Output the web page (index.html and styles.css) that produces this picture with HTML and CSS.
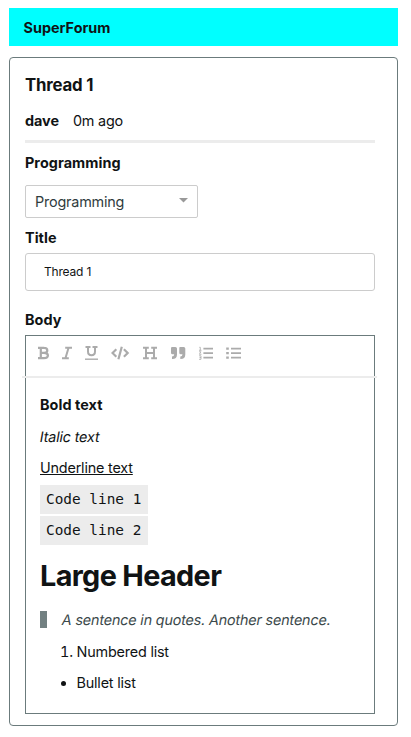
FILE: index.html
```html
<!DOCTYPE html>
<html lang="en">
<head>
<meta charset="utf-8">
<title>SuperForum</title>
<link rel="stylesheet" href="styles.css">
</head>
<body>
<header class="topbar">SuperForum</header>
<main class="thread">
  <h1 class="thread-title">Thread 1</h1>
  <div class="meta"><strong>dave</strong><span>0m ago</span></div>
  <div class="label category">Programming</div>
  <div class="select"><span>Programming</span><svg width="9" height="5" viewBox="0 0 9 5"><path d="M0 0h9L4.5 4.5z" fill="#999"/></svg></div>
  <div class="label title-label">Title</div>
  <div class="input">Thread 1</div>
  <div class="label body-label">Body</div>
  <section class="editor">
    <div class="toolbar">
      <svg width="11" height="14" viewBox="0 0 11 14"><path class="medium" d="M0 1.9h6.3M0 12.1h6.3M2.8 2v10M2.8 6.9h3.7M6 1.9c4.4 0 4.4 5 0 5M6 6.9c5.2 0 5.2 5.2 0 5.2"/></svg>
      <svg width="10" height="14" viewBox="0 0 10 14"><path d="M3.2 1.8H10M0 12.2h6.8M6.5 2L3.5 12"/></svg>
      <svg width="13" height="14" viewBox="0 0 13 14"><path d="M.5 1h5M7.5 1h5M3 1v4.5c0 5 7 5 7 0V1"/><path d="M0 13.2h13" class="thin"/></svg>
      <svg width="19" height="14" viewBox="0 0 19 14"><path class="medium" d="M5.3 3.2L1.5 7l3.8 3.8M12.9 3.2L16.7 7l-3.8 3.8M10.8 .8L7.4 13.2"/></svg>
      <svg width="14" height="14" viewBox="0 0 14 14"><path d="M0 1.8h5.8M8.2 1.8H14M0 12.2h5.8M8.2 12.2H14M3 2v10M11 2v10M3 7h8"/></svg>
      <svg width="16" height="14" viewBox="0 0 16 14"><path class="fill" d="M2 1h3.4q1.6 0 1.6 1.6V8.5q0 4.5-4.7 4.5H2v-2.4q2.2 0 2.2-2.3H2.4Q1 8.3 1 6.7V2.4Q1 1 2 1zM10.3 1h3.4q1.6 0 1.6 1.6V8.5q0 4.5-4.7 4.5h-.3v-2.4q2.2 0 2.2-2.3h-1.8q-1.4 0-1.4-1.6V2.4Q9 1 10.3 1z"/></svg>
      <svg width="14" height="14" viewBox="0 0 14 14"><path class="list" d="M4.4 2.6h9.6M4.4 7.1h9.6M4.4 11.6h9.6"/><path class="digits" d="M.3 1.3h1v3M0 4.3h2.5M0 5.8h2L.3 8.3h2.2M0 9.8h2v3.5H0M.5 11.5H2"/></svg>
      <svg width="15" height="14" viewBox="0 0 15 14"><path class="list" d="M5 2.6h10M5 7.1h10M5 11.6h10"/><path class="bullets" d="M.2 2.6h2.6M.2 7.1h2.6M.2 11.6h2.6"/></svg>
    </div>
    <div class="rule"></div>
    <div class="content">
      <p><strong>Bold text</strong></p>
      <p><em class="slanted">Italic text</em></p>
      <p><u>Underline text</u></p>
      <pre><code>Code line 1</code><code>Code line 2</code></pre>
      <h2>Large Header</h2>
      <blockquote><span class="slanted">A sentence in quotes. Another sentence.</span></blockquote>
      <ol><li>Numbered list</li></ol>
      <ul><li>Bullet list</li></ul>
    </div>
  </section>
</main>
</body>
</html>
```
FILE: styles.css
```css
* { box-sizing: border-box; }
body {
  margin: 8px 13px 0 9px;
  background: #fff;
  color: #101314;
  font: 14.4px/20px Inter, sans-serif;
  letter-spacing: -.19px;
}
h1, h2, p, pre, ol, ul, blockquote { margin: 0; }
strong { letter-spacing: .06px; }
.topbar {
  height: 38px;
  padding-left: 14.5px;
  background: #00ffff;
  font-weight: 700;
  letter-spacing: 0;
  line-height: 40px;
}
.thread {
  height: 669px;
  margin-top: 11px;
  padding: 17px 22px 0 15px;
  border: 1px solid #6b7b7c;
  border-radius: 4px;
}
.thread-title { font-size: 16.8px; line-height: 20px; }
.meta {
  display: flex;
  gap: 14px;
  height: 48px;
  padding-top: 16px;
  border-bottom: 3px solid #ececec;
}
.meta strong { letter-spacing: -.05px; }
.label { font-weight: 700; letter-spacing: .05px; }
.category { margin-top: 10px; }
.select {
  display: flex;
  align-items: center;
  justify-content: space-between;
  width: 173px;
  height: 33px;
  margin-top: 12px;
  padding: 1px 9px 0 9px;
  border: 1px solid #ccc;
  border-radius: 2px;
  color: #303c3e;
}
.select svg { margin-top: -3px; }
.title-label { margin-top: 10px; }
.input {
  height: 38px;
  margin-top: 5px;
  padding-left: 18px;
  border: 1px solid #ccc;
  border-radius: 3px;
  font-size: 12px;
  line-height: 36px;
}
.body-label { margin-top: 19px; }
.editor {
  height: 379px;
  margin-top: 5px;
  border: 1px solid #6b7b7c;
}
.toolbar {
  display: flex;
  gap: 13px;
  height: 40px;
  padding: 10px 0 0 12px;
}
.toolbar path { fill: none; stroke: #ababab; stroke-width: 2; }
.toolbar .medium { stroke-width: 2.2; }
.toolbar .thin { stroke-width: 1.4; }
.toolbar .fill { fill: #ababab; stroke: none; }
.toolbar .list { stroke-width: 1.8; }
.toolbar .bullets { stroke-width: 2.4; }
.toolbar .digits { stroke-width: .8; }
.rule { height: 2px; margin: 0 -3px 0 -4px; background: #ececec; }
.content { padding: 17px 14px 0; }
.content p { height: 20px; margin-bottom: 11.5px; }
.slanted {
  display: inline-block;
  font-style: normal;
  white-space: nowrap;
  transform: skewX(-10deg);
}
pre {
  display: flex;
  flex-direction: column;
  align-items: flex-start;
  gap: 2px;
  margin-top: -4.5px;
}
code {
  width: 108px;
  height: 29px;
  padding: 0 6px;
  background: #ececec;
  font: 14.4px/28px "DejaVu Sans Mono", monospace;
  letter-spacing: 0;
}
pre code:last-child { line-height: 29px; }
h2 {
  margin-top: 13px;
  font-size: 28.8px;
  letter-spacing: -.64px;
  line-height: 36px;
}
blockquote {
  height: 17px;
  margin-top: 17px;
  padding-left: 15px;
  border-left: 7px solid #728081;
  color: #3c494b;
  line-height: 18px;
}
ol, ul { padding-left: 36.5px; }
ol { margin-top: 14px; }
ul { margin-top: 11px; }
```
